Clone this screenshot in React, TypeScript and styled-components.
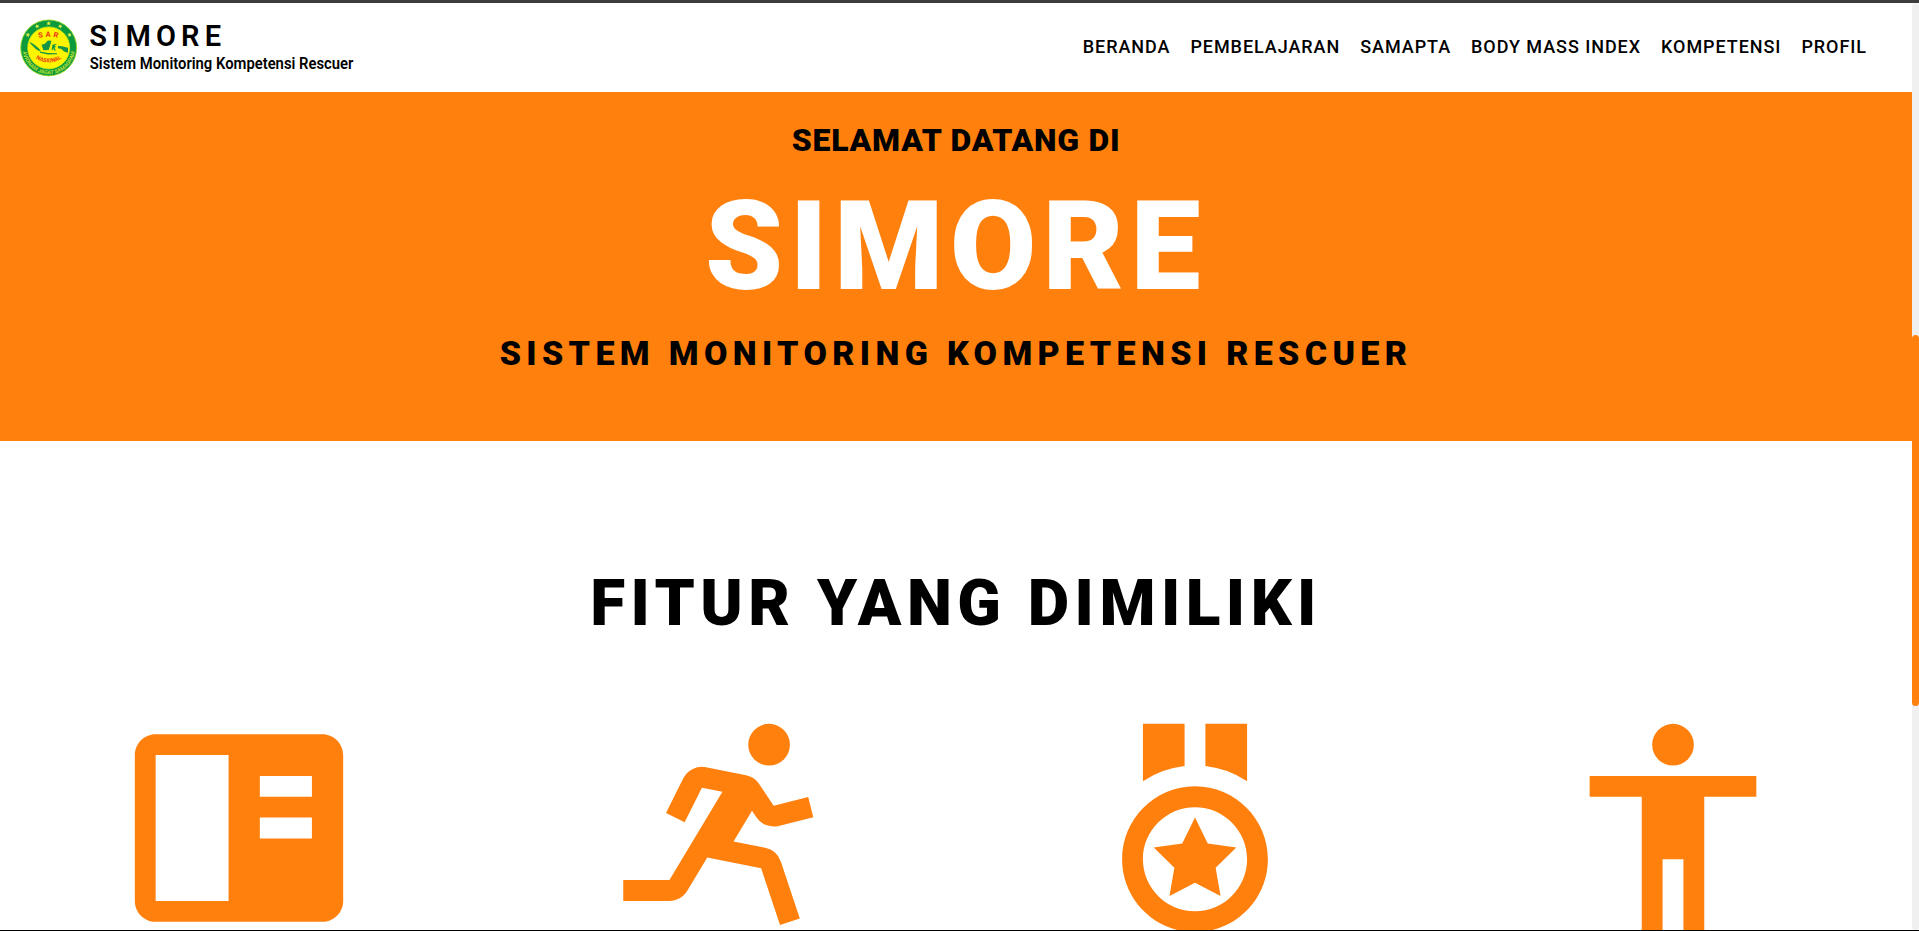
import React from "react";
import styled, { createGlobalStyle } from "styled-components";
import { BiBody, BiMedal, BiRun } from "react-icons/bi";

const ORANGE = "#ff800d";

const GlobalStyle = createGlobalStyle`
  *, *::before, *::after { box-sizing: border-box; }
  body {
    margin: 0;
    overflow: hidden;
    background: #fff;
    color: #000;
    font-family: Roboto, sans-serif;
  }
`;

const Frame = styled.div`
  display: flex;
  height: 931px;
  border-top: 3px solid #3c3c3c;
  border-bottom: 1px solid #000;
  overflow: hidden;
`;

const Page = styled.div`
  flex: 1;
  min-width: 0;
  overflow: hidden;
`;

const ScrollTrack = styled.div`
  width: 7px;
  padding-top: 332px;
  border-radius: 4px;
  background: #f0f0f0;
`;

const ScrollThumb = styled.div`
  height: 371px;
  border-radius: 4px;
  background: ${ORANGE};
`;

const Header = styled.header`
  display: flex;
  align-items: center;
  justify-content: space-between;
  height: 89px;
  padding: 0 45px 0 20px;
  background: #fff;
`;

const Logo = styled.svg`
  display: block;
  width: 340px;
  height: 60px;
  overflow: visible;
  font-family: Roboto, sans-serif;
`;

const Nav = styled.nav`
  display: flex;
  gap: 20px;
  margin-bottom: 2px;
`;

const NavLink = styled.a`
  color: #000;
  font-size: 18px;
  font-weight: 500;
  line-height: 28px;
  letter-spacing: 0.94px;
  white-space: nowrap;
  text-decoration: none;
`;

const Hero = styled.section`
  display: flex;
  flex-direction: column;
  align-items: center;
  height: 349px;
  padding-top: 28px;
  background: ${ORANGE};
`;

const Welcome = styled.p`
  margin: 0;
  font-size: 32px;
  font-weight: 900;
  line-height: 40px;
  letter-spacing: 0.75px;
`;

const Brand = styled.h1`
  margin: 17px 0 16px;
  color: #fff;
  font-size: 125px;
  font-weight: 900;
  line-height: 140px;
  letter-spacing: 6.4px;
`;

const Subtitle = styled.p`
  margin: 0;
  font-size: 34px;
  font-weight: 900;
  line-height: 40px;
  letter-spacing: 5.35px;
`;

const Features = styled.section`
  padding-top: 123px;
`;

const FeaturesTitle = styled.h2`
  margin: 0 0 58.75px;
  font-size: 64px;
  font-weight: 900;
  line-height: 80px;
  letter-spacing: 5.45px;
  text-align: center;
`;

const FeatureGrid = styled.div`
  display: grid;
  grid-template-columns: repeat(4, 1fr);
  justify-items: center;
  color: ${ORANGE};

  svg {
    display: block;
    width: 250px;
    height: 250px;
  }
`;

const links = ["BERANDA", "PEMBELAJARAN", "SAMAPTA", "BODY MASS INDEX", "KOMPETENSI", "PROFIL"];

const stars = [-58, -28, 0, 28, 58];

function BrandLogo() {
  return (
    <Logo viewBox="0 0 340 60" role="img" aria-label="Simore">
      <defs>
        <path id="motto" d="M2.4 29.9 A26.3 26.3 0 0 0 55 29.9" />
        <path id="sar" d="M14.5 22 Q28.7 15.5 43 22" />
        <path id="nasional" d="M15 40 Q28.7 49 42.4 40" />
      </defs>
      <circle cx="28.7" cy="29.9" r="28" fill="#0b9a3c" stroke="#a5dc22" strokeWidth="0.8" />
      <circle cx="28.7" cy="29.9" r="21" fill="#fdf500" stroke="#c5e51a" strokeWidth="0.8" />
      {stars.map((angle) => (
        <path
          key={angle}
          transform={`rotate(${angle} 28.7 29.9)`}
          d="M28.7 3l.7 1.5 1.6.1-1.2 1.1.4 1.6-1.5-.9-1.5.9.4-1.6-1.2-1.1 1.6-.1z"
          fill="#dcec4a"
        />
      ))}
      <g fill="#159447">
        <path d="M9.5 24c2.5.8 4.500 2.300 6.500 4 2 1.600 3.800 3 4.800 5.200-3-.4-5-2-6.700-4-1.700-1.800-3.600-3-4.600-5.200z" />
        <path d="M20 33.600l8 1.500 9 .2v1l-9 .1-8-1.700z" />
        <path d="M21.500 26.500c2.500.2 4.800-1.500 6.300-4l3.700.2-1.200 4.300-1.600 5-5.300.2z" />
        <path d="M32.500 26.800l4.500-1-2.500 2.200 2 .9-2 .5 1.200 3.300-1.600-.3-.8-2.500-.9 2.400-.9-.2z" />
        <path d="M38 28l4 .2 6 1.500v5l-4-1.300-2.500-2.400-3.500-.8z" />
      </g>
      <text fontSize="7.5" fontWeight="800" fill="#f0421c">
        <textPath href="#sar" startOffset="52%" textAnchor="middle" letterSpacing="2.2">SAR</textPath>
      </text>
      <text fontSize="5.6" fontWeight="800" fill="#f0421c">
        <textPath href="#nasional" startOffset="50%" textAnchor="middle">NASIONAL</textPath>
      </text>
      <text fontSize="5.4" fontWeight="700" fill="#b9de35">
        <textPath href="#motto" startOffset="50%" textAnchor="middle">AVIGNAM JAGAT SAMAGRAM</textPath>
      </text>
      <text x="69.3" y="28.3" fontSize="29" fontWeight="600" letterSpacing="5.1">
        SIMORE
      </text>
      <text x="69.8" y="50.8" fontSize="16.5" fontWeight="600" textLength="263.5" lengthAdjust="spacingAndGlyphs">
        Sistem Monitoring Kompetensi Rescuer
      </text>
    </Logo>
  );
}

function ReaderIcon() {
  return (
    <svg viewBox="0 0 24 24" fill="currentColor">
      <path
        fillRule="evenodd"
        d="M20 3H4c-1.103 0-2 .897-2 2v14c0 1.103.897 2 2 2h16c1.103 0 2-.897 2-2V5c0-1.103-.897-2-2-2zM4 5h7v14H4V5zm10 2h5v2h-5V7zm0 4h5v2h-5v-2z"
      />
    </svg>
  );
}

export default function App() {
  return (
    <>
      <GlobalStyle />
      <Frame>
        <Page>
          <Header>
            <BrandLogo />
            <Nav>
              {links.map((label) => (
                <NavLink key={label}>{label}</NavLink>
              ))}
            </Nav>
          </Header>
          <Hero>
            <Welcome>SELAMAT DATANG DI</Welcome>
            <Brand>SIMORE</Brand>
            <Subtitle>SISTEM MONITORING KOMPETENSI RESCUER</Subtitle>
          </Hero>
          <Features>
            <FeaturesTitle>FITUR YANG DIMILIKI</FeaturesTitle>
            <FeatureGrid>
              <ReaderIcon />
              <BiRun />
              <BiMedal />
              <BiBody />
            </FeatureGrid>
          </Features>
        </Page>
        <ScrollTrack>
          <ScrollThumb />
        </ScrollTrack>
      </Frame>
    </>
  );
}
